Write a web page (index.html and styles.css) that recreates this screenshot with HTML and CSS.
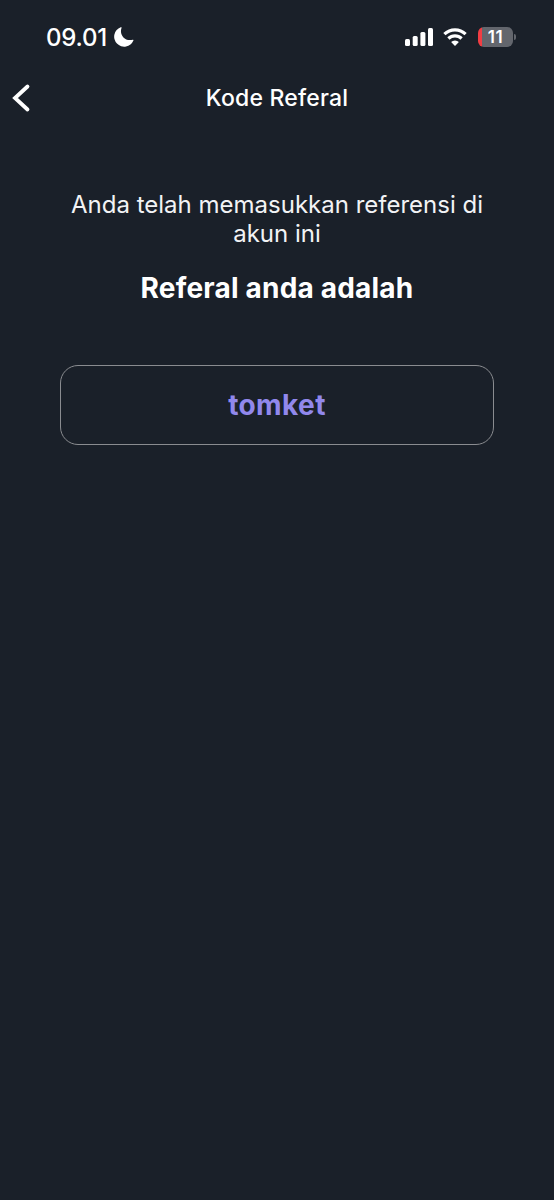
FILE: index.html
```
<!DOCTYPE html>
<html lang="id">
<head>
<meta charset="utf-8">
<title>Kode Referal</title>
<link rel="stylesheet" href="styles.css">
</head>
<body>
<div class="status">
  <div class="clock">
    <span class="time">09.01</span>
    <svg class="moon" width="20" height="20" viewBox="0 0 20 20"><path d="M7.600.8C5 7.500 10.500 14.800 18.800 12.700Q19.800 12.600 19.400 13.500A10 10 0 1 1 6.700.3Q7.900-.1 7.600.8Z" fill="#fff"/></svg>
  </div>
  <div class="indicators">
    <svg width="28" height="18" viewBox="0 0 28 18" fill="#fff"><rect x="0" y="11" width="5" height="7" rx="1.500"/><rect x="7.700" y="8" width="5" height="10" rx="1.500"/><rect x="15.400" y="4" width="5" height="14" rx="1.500"/><rect x="23" y="0" width="5" height="18" rx="1.500"/></svg>
    <svg class="wifi" width="24" height="18" viewBox="0 0 24 18" fill="none" stroke="#fff" stroke-width="3.200"><path d="M1.400 6.100a15.200 15.200 0 0 1 21.200 0"/><path d="M5.400 10.500a9.500 9.500 0 0 1 13.200 0"/><path d="M12 18 8.100 14.100a5.500 5.500 0 0 1 7.800 0Z" fill="#fff" stroke="none"/></svg>
    <div class="battery"><span class="cell">11</span><span class="cap"></span></div>
  </div>
</div>
<header class="header">
  <svg class="back" width="20" height="30" viewBox="0 0 20 30"><path d="M15.500 3.500 3 15l12.500 11.500" fill="none" stroke="#fff" stroke-width="3.800" stroke-linecap="round" stroke-linejoin="miter"/></svg>
  <h1 class="title">Kode Referal</h1>
</header>
<main class="content">
  <p class="intro">Anda telah memasukkan referensi di akun ini</p>
  <h2 class="label">Referal anda adalah</h2>
  <div class="code">tomket</div>
</main>
</body>
</html>
```
FILE: styles.css
```
* { box-sizing: border-box; }
body {
  margin: 0;
  min-height: 1200px;
  background: #1a2029;
  color: #fff;
  font-family: Inter, "Liberation Sans", sans-serif;
}
.status {
  display: flex;
  justify-content: space-between;
  align-items: center;
  height: 74px;
  padding: 0 38px 0 46px;
}
.clock { display: flex; align-items: center; gap: 7px; }
.time { padding-top: 1px; font-size: 24px; font-weight: 500; line-height: 30px; letter-spacing: -0.2px; }
.indicators { display: flex; align-items: center; }
.wifi { margin: 0 11px 0 10px; }
.battery { display: flex; align-items: center; gap: 1px; }
.cell {
  width: 35px;
  height: 20px;
  border-radius: 6px;
  background: linear-gradient(90deg, #f23d43 4px, #63666d 4px);
  font-size: 17px;
  font-weight: 600;
  line-height: 20px;
  letter-spacing: 0.6px;
  text-align: center;
}
.cap { width: 2px; height: 6px; border-radius: 0 2px 2px 0; background: #63666d; }
.header {
  display: grid;
  grid-template-columns: 40px 1fr 40px;
  align-items: center;
  height: 48px;
}
.back { margin-left: 12px; }
.title {
  margin: 0;
  font-size: 23px;
  font-weight: 500;
  line-height: 30px;
  letter-spacing: 0.2px;
  text-align: center;
}
.content { padding: 68px 60px 0; text-align: center; }
.intro { margin: 0 -10px; padding: 0 10px; font-size: 24px; font-weight: 400; line-height: 29px; color: #f2f3f5; }
.label { margin: 22px 0 0; font-size: 28px; font-weight: 700; line-height: 36px; letter-spacing: 0.2px; }
.code {
  height: 80px;
  margin-top: 59px;
  border: 1px solid #8a8c90;
  border-radius: 18px;
  color: #9188ec;
  font-size: 28px;
  font-weight: 700;
  line-height: 79px;
  letter-spacing: 0.4px;
}
```
